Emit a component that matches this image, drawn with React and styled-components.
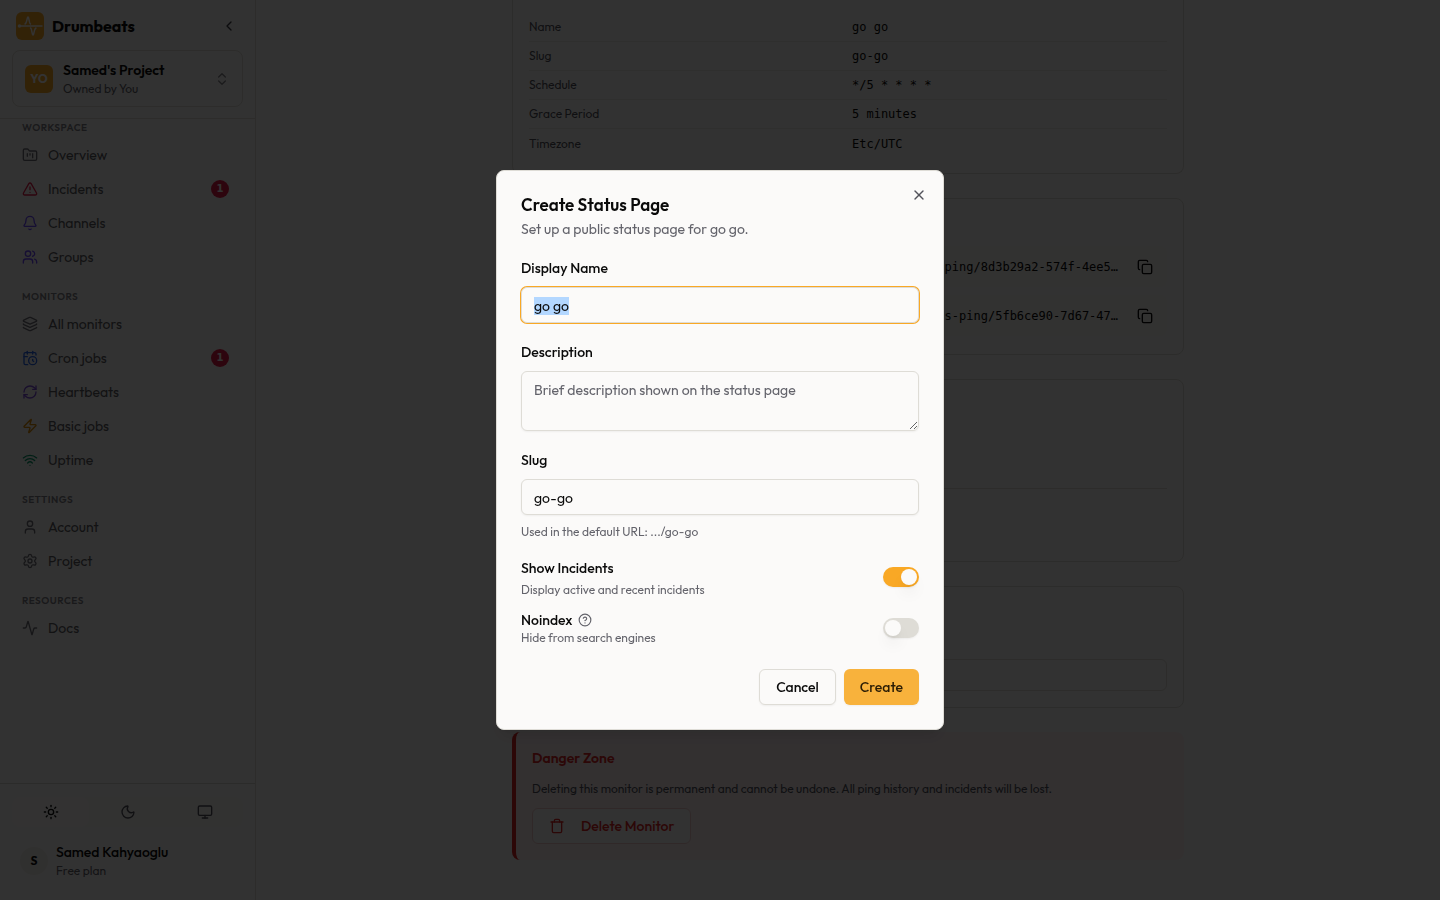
import React, { useEffect, useRef } from "react";
import styled, { createGlobalStyle, css } from "styled-components";
import {
  FolderKanban, TriangleAlert, Bell, Users, Layers, CalendarClock, RefreshCw, Zap, Wifi,
  User, Settings, Activity, Sun, Moon, Monitor, ChevronLeft, ChevronsUpDown, Copy, Trash,
  X, CircleQuestionMark,
} from "lucide-react";

const Global = createGlobalStyle`
  *, *::before, *::after { box-sizing: border-box; }
  body { margin: 0; background: #fbfaf9; }
  body, button, input, textarea { font-family: Outfit, Lato, "Liberation Sans", sans-serif; }
  body { font-size: 14px; line-height: 20px; color: #0a0a0a; }
  h1, h2, h3, p, dl, dd, dt, ul { margin: 0; padding: 0; }
  button { cursor: pointer; }
`;

const Shell = styled.div`
  display: flex;
  height: 100vh;
  overflow: hidden;
`;

const Sidebar = styled.aside`
  flex: none;
  display: flex;
  flex-direction: column;
  width: 256px;
  border-right: 1px solid #dedcd6;
`;

const Brand = styled.div`
  display: flex;
  align-items: center;
  gap: 8px;
  padding: 12px 15px 10px 16px;
  font-size: 16px;
  line-height: 28px;
  font-weight: 700;
`;

const BrandName = styled.span`
  flex: 1;
`;

const IconButton = styled.button`
  display: grid;
  place-items: center;
  padding: 0;
  width: ${(p) => p.$size}px;
  height: ${(p) => p.$size}px;
  border: 0;
  background: none;
  color: ${(p) => p.$color || "#0a0a0a"};
`;

const ProjectButton = styled.button`
  display: flex;
  align-items: center;
  gap: 10px;
  margin: 0 12px 11px;
  padding: 8px 12px;
  height: 57px;
  border: 1px solid #dedcd6;
  border-radius: 8px;
  background: none;
  color: #0a0a0a;
  text-align: left;
`;

const ProjectBadge = styled.span`
  display: grid;
  place-items: center;
  width: 28px;
  height: 28px;
  border-radius: 6px;
  background: #f9a825;
  color: #fff;
  font-size: 12px;
  font-weight: 700;
`;

const TwoLines = styled.span`
  flex: 1;
  display: flex;
  flex-direction: column;
  strong { font-size: 14px; line-height: 20px; font-weight: ${(p) => p.$weight}; }
  small { font-size: 12px; line-height: 18px; color: #63636b; }
`;

const Nav = styled.nav`
  flex: 1;
  overflow: hidden;
  border-top: 1px solid #dedcd6;
  padding: 0 12px;
`;

const NavGroup = styled.section`
  margin-bottom: 14px;
`;

const NavTitle = styled.h3`
  padding: 0 10px;
  margin-bottom: 2px;
  font-size: 10px;
  line-height: 17px;
  font-weight: 600;
  letter-spacing: 0.5px;
  text-transform: uppercase;
  color: #7f7f87;
`;

const NavLink = styled.a`
  display: flex;
  align-items: center;
  gap: 10px;
  height: 34px;
  padding: 0 14px 0 10px;
  color: #5a5a62;
  text-decoration: none;
  span { flex: 1; }
`;

const Count = styled.b`
  display: grid;
  place-items: center;
  width: 18px;
  height: 18px;
  border-radius: 9px;
  background: #e11d48;
  color: #fff;
  font: 700 10px/18px "DejaVu Sans", sans-serif;
`;

const SideFooter = styled.div`
  border-top: 1px solid #d8d6d0;
  padding: 13px 12px 20px;
`;

const ThemeSwitch = styled.div`
  display: grid;
  grid-template-columns: repeat(3, 1fr);
  height: 30px;
  border-radius: 8px;
  background: #f8f7f5;
`;

const ThemeOption = styled.button`
  display: grid;
  place-items: center;
  padding: 0;
  border: 0;
  border-radius: 7px;
  background: ${(p) => (p.$active ? "#fcfbfa" : "none")};
  color: ${(p) => (p.$active ? "#0a0a0a" : "#52525b")};
`;

const Account = styled.div`
  display: flex;
  align-items: center;
  gap: 8px;
  padding: 15px 8px 0;
`;

const Avatar = styled.span`
  display: grid;
  place-items: center;
  width: 28px;
  height: 28px;
  border-radius: 50%;
  background: #f0efea;
  font-size: 12px;
  font-weight: 700;
`;

const Main = styled.main`
  flex: 1;
  min-width: 0;
  overflow: hidden;
`;

const Column = styled.div`
  display: flex;
  flex-direction: column;
  gap: 24px;
  width: 100%;
  max-width: 672px;
  margin: 0 auto;
`;

const Card = styled.section`
  border: 1px solid #dcdad4;
  border-radius: 8px;
  padding: ${(p) => p.$pad || "0 16px"};
  height: ${(p) => p.$height}px;
  ${(p) => p.$cut && css`
    border-top: 0;
    border-radius: 0 0 8px 8px;
  `}
`;

const Details = styled.dl`
  padding-top: 13px;
`;

const DetailRow = styled.div`
  display: grid;
  grid-template-columns: 1fr 1fr;
  align-items: center;
  height: 29px;
  border-bottom: 1px solid #eceae5;
  &:last-child { border-bottom: 0; }
  dt { font-size: 12px; color: #52525b; }
  dd { font: 12px/18px "DejaVu Sans Mono", monospace; padding-left: 4px; }
`;

const PingRow = styled.div`
  display: flex;
  align-items: center;
  gap: 15px;
  height: 41px;
  margin-bottom: 8px;
  padding-right: 10px;
  border-radius: 6px;
  background: #f8f7f5;
  code {
    flex: 1;
    text-align: right;
    font: 12px/18px "DejaVu Sans Mono", monospace;
  }
`;

const Rule = styled.hr`
  margin: 108px 0 0;
  border: 0;
  border-top: 1px solid #dedcd6;
`;

const PlainInput = styled.input`
  display: block;
  width: 100%;
  height: 32px;
  border: 1px solid #dedcd6;
  border-radius: 6px;
  background: none;
`;

const Danger = styled.section`
  height: 128px;
  padding: 16px;
  border-left: 4px solid #dc2626;
  border-radius: 8px;
  background: #fcf0f1;
  h2 { font-size: 14px; line-height: 20px; font-weight: 600; color: #dc2626; }
  p { margin: 12px 0 10px; font-size: 12px; line-height: 18px; color: #52525b; }
`;

const DeleteButton = styled.button`
  display: flex;
  align-items: center;
  gap: 16px;
  height: 36px;
  padding: 0 16px;
  border: 1px solid #eec9c9;
  border-radius: 6px;
  background: #fbfaf9;
  color: #dc2626;
  font-size: 14px;
  font-weight: 500;
`;

const Overlay = styled.div`
  position: fixed;
  inset: 0;
  display: grid;
  place-items: center;
  background: rgba(0, 0, 0, 0.8);
`;

const Dialog = styled.div`
  position: relative;
  width: 448px;
  padding: 24px;
  border: 1px solid #dedcd6;
  border-radius: 8px;
  background: #fbfaf9;
  box-shadow: 0 10px 15px -3px rgba(0, 0, 0, 0.1), 0 4px 6px -4px rgba(0, 0, 0, 0.1);
`;

const CloseButton = styled(IconButton)`
  position: absolute;
  top: 16px;
  right: 16px;
`;

const DialogTitle = styled.h2`
  font-size: 17px;
  line-height: 20px;
  font-weight: 600;
`;

const DialogText = styled.p`
  margin: 4px 0 19px;
  color: #63636b;
`;

const Field = styled.div`
  display: flex;
  flex-direction: column;
  margin-bottom: ${(p) => p.$after || 19}px;
`;

const Label = styled.label`
  font-size: 14px;
  line-height: ${(p) => p.$line || 20}px;
  font-weight: 500;
`;

const control = css`
  margin-top: 9px;
  width: 100%;
  border: 1px solid #dedcd6;
  border-radius: 6px;
  background: #fbfaf9;
  color: #0a0a0a;
  font-size: 14px;
  line-height: 20px;
  box-shadow: 0 1px 2px rgba(0, 0, 0, 0.05);
  outline: none;
  &::placeholder { color: #63636b; opacity: 1; }
  &::selection { background: #b3d7ff; color: #0a0a0a; }
`;

const TextInput = styled.input`
  ${control}
  height: 36px;
  padding: 2px 12px 0;
  &:focus { box-shadow: 0 0 0 1px #f9a825; }
`;

const TextArea = styled.textarea`
  ${control}
  height: 60px;
  padding: 8px 12px;
  resize: vertical;
`;

const Hint = styled.p`
  margin-top: ${(p) => p.$before || 0}px;
  font-size: 12px;
  line-height: 16px;
  color: #63636b;
`;

const SwitchRow = styled.div`
  display: flex;
  align-items: center;
  justify-content: space-between;
  margin-bottom: ${(p) => p.$after}px;
`;

const SwitchText = styled.div`
  display: flex;
  flex-direction: column;
`;

const LabelLine = styled.div`
  display: flex;
  align-items: center;
  gap: 6px;
`;

const Switch = styled.input`
  appearance: none;
  display: flex;
  align-items: center;
  width: 36px;
  height: 20px;
  margin: 0;
  padding: 0 2px;
  border-radius: 10px;
  background: #dedcd6;
  box-shadow: 0 1px 2px rgba(0, 0, 0, 0.05);
  &::before {
    content: "";
    width: 16px;
    height: 16px;
    border-radius: 50%;
    background: #fbfaf9;
    box-shadow: 0 10px 15px -3px rgba(0, 0, 0, 0.1), 0 4px 6px -4px rgba(0, 0, 0, 0.1);
  }
  &:checked { justify-content: flex-end; background: #f9a825; }
`;

const Actions = styled.div`
  display: flex;
  justify-content: flex-end;
  gap: 8px;
`;

const Button = styled.button`
  height: 36px;
  padding: 0 16px;
  border: ${(p) => (p.$primary ? "0" : "1px solid #dedcd6")};
  border-radius: 6px;
  background: ${(p) => (p.$primary ? "#f8b23c" : "#fbfaf9")};
  color: ${(p) => (p.$primary ? "#2b1d05" : "#0a0a0a")};
  font-size: 14px;
  font-weight: 500;
  box-shadow: 0 1px 2px rgba(0, 0, 0, 0.05);
`;

const Logo = () => (
  <svg width="28" height="28" viewBox="0 0 28 28" fill="none" aria-hidden="true">
    <rect width="28" height="28" rx="6" fill="#f9a825" />
    <circle cx="3.5" cy="14" r="1.8" fill="#fff" />
    <path
      d="M3.5 14H26M9 12Q10 11.500 10.500 9.500L11.500 5.500Q12 4.500 12.500 5.500L13.500 10Q13.800 11.700 14.500 12M14.500 16Q15.200 16.300 15.500 18L16.500 22.500Q17 23.500 17.500 22.500L18.500 18.500Q19 16.500 20 16"
      stroke="#fff"
      strokeWidth="1.4"
      strokeLinecap="round"
      strokeLinejoin="round"
    />
  </svg>
);

const GROUPS = [
  ["Workspace", [
    ["Overview", FolderKanban, "#71717a"],
    ["Incidents", TriangleAlert, "#e11d48", 1],
    ["Channels", Bell, "#6d4aff"],
    ["Groups", Users, "#6d4aff"],
  ]],
  ["Monitors", [
    ["All monitors", Layers, "#71717a"],
    ["Cron jobs", CalendarClock, "#2563eb", 1],
    ["Heartbeats", RefreshCw, "#7c4ddb"],
    ["Basic jobs", Zap, "#d98a06"],
    ["Uptime", Wifi, "#059669"],
  ]],
  ["Settings", [
    ["Account", User, "#71717a"],
    ["Project", Settings, "#71717a"],
  ]],
  ["Resources", [["Docs", Activity, "#71717a"]]],
];

const DETAILS = [
  ["Name", "go go"],
  ["Slug", "go-go"],
  ["Schedule", "*/5 * * * *"],
  ["Grace Period", "5 minutes"],
  ["Timezone", "Etc/UTC"],
];

const PINGS = ["ping/8d3b29a2-574f-4ee5…", "s-ping/5fb6ce90-7d67-47…"];

export default function App() {
  const nameRef = useRef(null);
  useEffect(() => {
    nameRef.current.focus();
    nameRef.current.select();
  }, []);

  return (
    <>
      <Global />
      <Shell>
        <Sidebar>
          <Brand>
            <Logo />
            <BrandName>Drumbeats</BrandName>
            <IconButton $size={22} $color="#3f3f46" aria-label="Collapse sidebar"><ChevronLeft size={16} /></IconButton>
          </Brand>
          <ProjectButton>
            <ProjectBadge>YO</ProjectBadge>
            <TwoLines $weight={600}><strong>Samed's Project</strong><small>Owned by You</small></TwoLines>
            <ChevronsUpDown size={16} color="#85858d" />
          </ProjectButton>
          <Nav>
            {GROUPS.map(([title, links]) => (
              <NavGroup key={title}>
                <NavTitle>{title}</NavTitle>
                {links.map(([name, Icon, color, count]) => (
                  <NavLink href="#" key={name}>
                    <Icon size={16} color={color} />
                    <span>{name}</span>
                    {count && <Count>{count}</Count>}
                  </NavLink>
                ))}
              </NavGroup>
            ))}
          </Nav>
          <SideFooter>
            <ThemeSwitch>
              <ThemeOption $active aria-label="Light"><Sun size={16} /></ThemeOption>
              <ThemeOption aria-label="Dark"><Moon size={16} /></ThemeOption>
              <ThemeOption aria-label="System"><Monitor size={16} /></ThemeOption>
            </ThemeSwitch>
            <Account>
              <Avatar>S</Avatar>
              <TwoLines $weight={500}><strong>Samed Kahyaoglu</strong><small>Free plan</small></TwoLines>
            </Account>
          </SideFooter>
        </Sidebar>
        <Main>
          <Column>
            <Card $cut $height={174}>
              <Details>
                {DETAILS.map(([term, value]) => (
                  <DetailRow key={term}><dt>{term}</dt><dd>{value}</dd></DetailRow>
                ))}
              </Details>
            </Card>
            <Card $height={157} $pad="47px 16px 0">
              {PINGS.map((url) => (
                <PingRow key={url}>
                  <code>{url}</code>
                  <IconButton $size={24} aria-label="Copy URL"><Copy size={16} /></IconButton>
                </PingRow>
              ))}
            </Card>
            <Card $height={183}><Rule /></Card>
            <Card $height={122} $pad="72px 16px 0"><PlainInput aria-label="Monitor tags" /></Card>
            <Danger>
              <h2>Danger Zone</h2>
              <p>Deleting this monitor is permanent and cannot be undone. All ping history and incidents will be lost.</p>
              <DeleteButton><Trash size={16} />Delete Monitor</DeleteButton>
            </Danger>
          </Column>
        </Main>
      </Shell>
      <Overlay>
        <Dialog role="dialog" aria-modal="true" aria-labelledby="dialog-title">
          <CloseButton $size={16} $color="#52525b" aria-label="Close"><X size={16} /></CloseButton>
          <DialogTitle id="dialog-title">Create Status Page</DialogTitle>
          <DialogText>Set up a public status page for go go.</DialogText>
          <Field>
            <Label htmlFor="name">Display Name</Label>
            <TextInput id="name" ref={nameRef} defaultValue="go go" />
          </Field>
          <Field>
            <Label htmlFor="description">Description</Label>
            <TextArea id="description" placeholder="Brief description shown on the status page" />
          </Field>
          <Field $after={16}>
            <Label htmlFor="slug">Slug</Label>
            <TextInput id="slug" defaultValue="go-go" />
            <Hint $before={9}>Used in the default URL: .../go-go</Hint>
          </Field>
          <SwitchRow $after={12}>
            <SwitchText>
              <Label $line={24} htmlFor="incidents">Show Incidents</Label>
              <Hint $before={2}>Display active and recent incidents</Hint>
            </SwitchText>
            <Switch id="incidents" type="checkbox" role="switch" defaultChecked />
          </SwitchRow>
          <SwitchRow $after={23}>
            <SwitchText>
              <LabelLine>
                <Label htmlFor="noindex">Noindex</Label>
                <CircleQuestionMark size={14} color="#63636b" />
              </LabelLine>
              <Hint>Hide from search engines</Hint>
            </SwitchText>
            <Switch id="noindex" type="checkbox" role="switch" />
          </SwitchRow>
          <Actions>
            <Button>Cancel</Button>
            <Button $primary>Create</Button>
          </Actions>
        </Dialog>
      </Overlay>
    </>
  );
}
